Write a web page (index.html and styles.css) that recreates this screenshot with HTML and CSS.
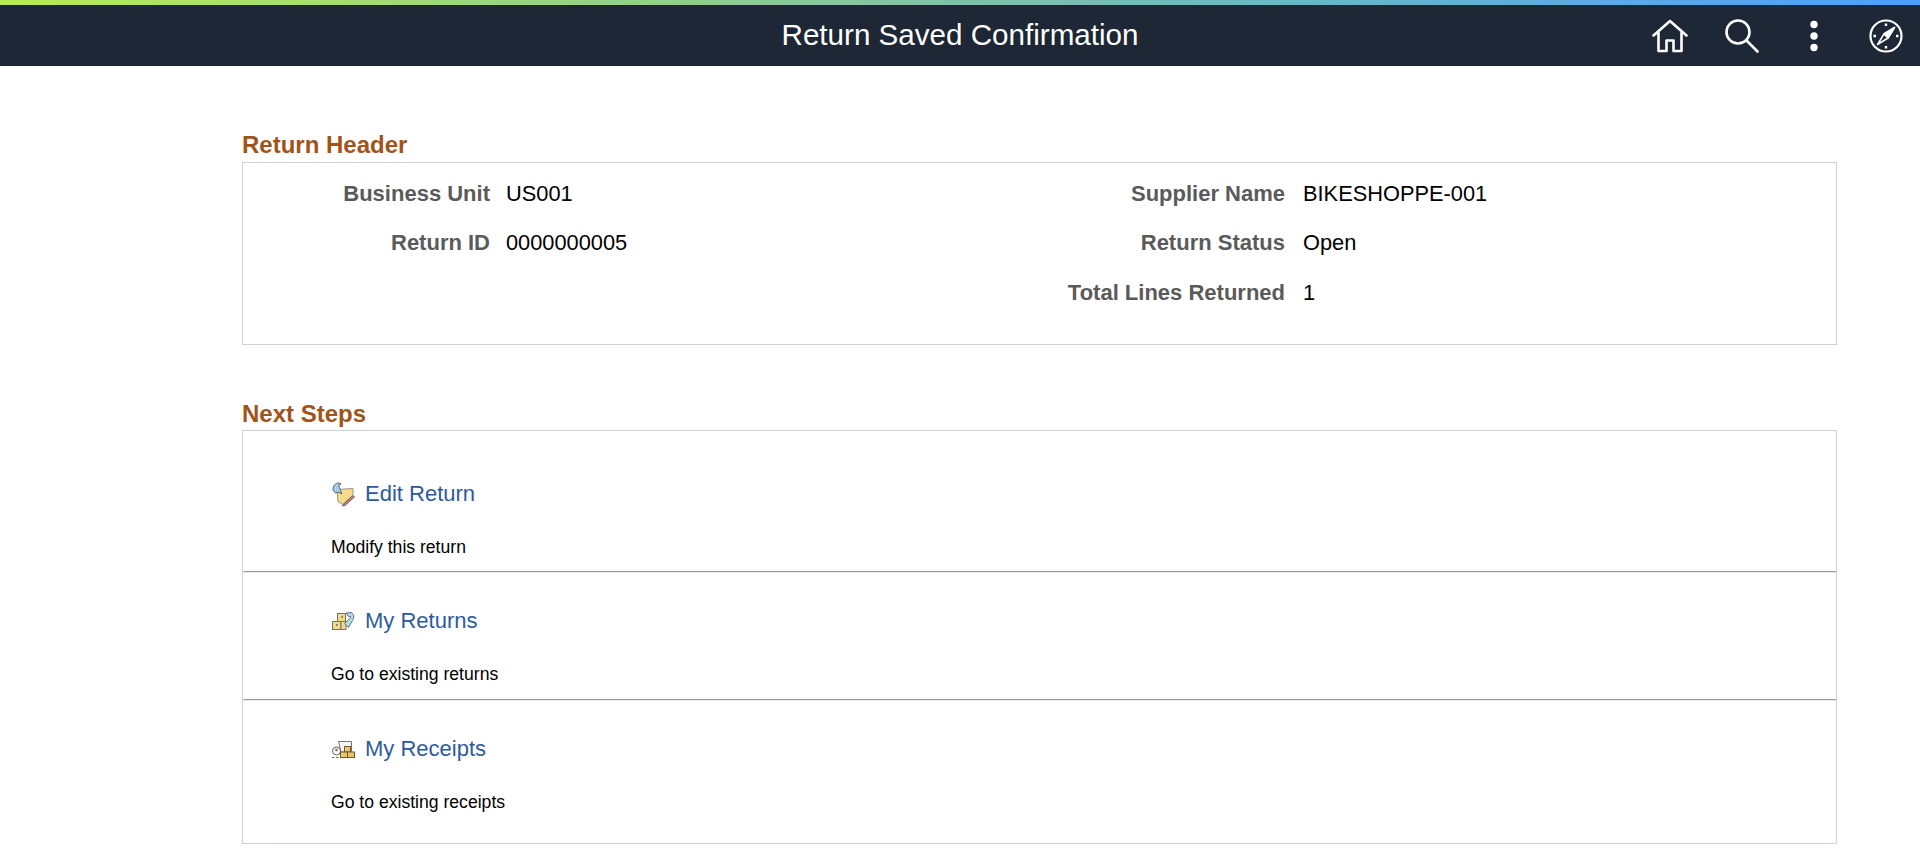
FILE: index.html
```html
<!DOCTYPE html>
<html lang="en">
<head>
    <meta charset="UTF-8">
    <title>Return Saved Confirmation</title>
    <link rel="stylesheet" href="styles.css">
</head>
<body>
    <div class="accent-bar"></div>
    <header class="banner">
        <h1>Return Saved Confirmation</h1>
        <nav class="banner-icons">
            <a href="#" class="banner-icon" aria-label="Home">
                <svg width="36" height="36" viewBox="0 0 36 36" fill="none" stroke="#fff" stroke-width="2.6" stroke-linejoin="round" stroke-linecap="round">
                    <path d="M1.500 17.500 L18 3 L34.500 17.500"/>
                    <path d="M6.500 15 V33 H14.500 V22.500 H21.500 V33 H29.500 V15"/>
                </svg>
            </a>
            <a href="#" class="banner-icon" aria-label="Search">
                <svg width="36" height="36" viewBox="0 0 36 36" fill="none" stroke="#fff" stroke-width="2.6" stroke-linecap="round">
                    <circle cx="14" cy="14" r="11.500"/>
                    <path d="M22.500 22.500 L33.500 33.500"/>
                </svg>
            </a>
            <a href="#" class="banner-icon" aria-label="Actions">
                <svg width="36" height="36" viewBox="0 0 36 36" fill="#fff">
                    <circle cx="18" cy="6.500" r="3.700"/>
                    <circle cx="18" cy="18" r="3.700"/>
                    <circle cx="18" cy="29.500" r="3.700"/>
                </svg>
            </a>
            <a href="#" class="banner-icon" aria-label="Navigator">
                <svg width="36" height="36" viewBox="0 0 36 36" fill="none" stroke="#fff" stroke-width="2.200">
                    <circle cx="18" cy="18" r="15.500"/>
                    <path d="M26.500 9.500 L20 20 L9.500 26.500 L16 16 Z" stroke-width="1.500" stroke-linejoin="round"/>
                    <path d="M26.500 9.500 L20 20 L16 16 Z" fill="#fff" stroke-width="1.500" stroke-linejoin="round"/>
                    <path d="M18 5.500v2.500M18 28v2.500M5.500 18H8M28 18h2.500" stroke-width="2.400"/>
                </svg>
            </a>
        </nav>
    </header>

    <main class="content">
        <section class="group header-group">
            <h2 class="group-title">Return Header</h2>
            <div class="group-box header-box">
                <div class="field-col">
                    <div class="field"><span class="field-label">Business Unit</span><span class="field-value">US001</span></div>
                    <div class="field"><span class="field-label">Return ID</span><span class="field-value">0000000005</span></div>
                </div>
                <div class="field-col">
                    <div class="field"><span class="field-label">Supplier Name</span><span class="field-value">BIKESHOPPE-001</span></div>
                    <div class="field"><span class="field-label">Return Status</span><span class="field-value">Open</span></div>
                    <div class="field"><span class="field-label">Total Lines Returned</span><span class="field-value">1</span></div>
                </div>
            </div>
        </section>

        <section class="group">
            <h2 class="group-title">Next Steps</h2>
            <div class="group-box">
                <div class="step">
                    <a href="#" class="step-link">
                        <svg width="24" height="26" viewBox="0 0 24 26">
                            <path d="M6 8.500 L22 7.500 V14 L12 23.500 L7 20.500 Z" fill="#f8dc8e" stroke="#9a9488"/>
                            <path d="M4.500 12 L2 9 C2 5 4 2 8 2 L10 3 L7.500 4.500 L11 13 L7 11 Z" fill="#a8cde8" stroke="#55626f"/>
                            <path d="M22 14.500 L12.500 23 L11.500 25 L14 24.500 L23.500 16 Z" fill="#d9737f" stroke="#6a6a6a"/>
                        </svg>
                        <span>Edit Return</span>
                    </a>
                    <p class="step-desc">Modify this return</p>
                </div>
                <div class="step">
                    <a href="#" class="step-link">
                        <svg width="24" height="26" viewBox="0 0 24 26">
                            <rect x="1.500" y="13.500" width="8.500" height="8" fill="#f4d88c" stroke="#77756a"/>
                            <rect x="10" y="13.500" width="5" height="8" fill="#f4d88c" stroke="#77756a"/>
                            <rect x="6.500" y="5.500" width="8" height="8" fill="#f4d88c" stroke="#77756a"/>
                            <path d="M5 17h1.500M10.500 9h1.500" stroke="#555" stroke-width="1.500"/>
                            <path d="M15 5 L20 4.500 C23 6 23.500 9.500 21.500 12.500 L17.500 19.500 L13.500 15.500 L17.500 12 L20 9 L17 8 Z" fill="#b9d9ef" stroke="#5d7184"/>
                        </svg>
                        <span>My Returns</span>
                    </a>
                    <p class="step-desc">Go to existing returns</p>
                </div>
                <div class="step">
                    <a href="#" class="step-link">
                        <svg width="24" height="26" viewBox="0 0 24 26">
                            <path d="M7.500 5.500 H20.500 V16 H10 Z" fill="#f6f6f6" stroke="#77756a"/>
                            <circle cx="5.500" cy="15" r="4" fill="#fff" stroke="#66645c"/>
                            <circle cx="5.500" cy="14" r="1.400" fill="#b06a78"/>
                            <path d="M1 21.500 H9" stroke="#66645c" stroke-dasharray="2.500 1.500"/>
                            <rect x="13.500" y="10.500" width="6" height="5.500" fill="#e8c566" stroke="#6e5a35"/>
                            <rect x="9.500" y="16" width="7" height="5.500" fill="#e8c566" stroke="#6e5a35"/>
                            <rect x="16.500" y="16" width="7" height="5.500" fill="#e8c566" stroke="#6e5a35"/>
                        </svg>
                        <span>My Receipts</span>
                    </a>
                    <p class="step-desc">Go to existing receipts</p>
                </div>
            </div>
        </section>
    </main>
</body>
</html>
```

FILE: styles.css
```css
* {
    box-sizing: border-box;
}
body {
    margin: 0;
    font-family: "Liberation Sans", Arial, sans-serif;
    background-color: white;
    color: black;
}
.accent-bar {
    height: 5px;
    background: linear-gradient(to right, #b7ec50 0%, #7fc2a8 50%, #4c9ffe 100%);
}
.banner {
    display: flex;
    align-items: center;
    justify-content: flex-end;
    position: relative;
    height: 61px;
    background-color: #1d2735;
}
.banner h1 {
    position: absolute;
    left: 0;
    right: 0;
    margin: -2px 0 0;
    text-align: center;
    font-size: 29.6px;
    font-weight: normal;
    color: white;
}
.banner-icons {
    display: flex;
    gap: 36px;
    padding-right: 16px;
    position: relative;
}
.banner-icon {
    display: block;
    height: 36px;
}
.content {
    padding: 66px 83px 0 242px;
}
.group {
    margin-bottom: 56px;
}
.group-title {
    margin: 0 0 4px;
    font-size: 24px;
    line-height: 26px;
    font-weight: bold;
    color: #a0541a;
}
.group + .group .group-title {
    margin-bottom: 3px;
}
.group-box {
    border: 1px solid #d0d0d8;
}
.header-box {
    display: grid;
    grid-template-columns: 795px 1fr;
    height: 183px;
    padding-top: 6px;
}
.field {
    display: flex;
    align-items: center;
    height: 49.5px;
    font-size: 22px;
}
.field-label {
    width: 263px;
    padding-right: 16px;
    text-align: right;
    font-weight: bold;
    color: #5a5a5a;
    white-space: nowrap;
}
.field-col + .field-col .field-label {
    width: 265px;
    padding-right: 18px;
}
.field-value {
    font-size: 21.8px;
    color: black;
}
.step {
    height: 128px;
    padding: 36px 0 0 88px;
    border-bottom: 1px solid #9a9a9a;
    box-shadow: 0 1px 0 #e8e8e8;
}
.step:first-child {
    height: 141px;
    padding-top: 50px;
}
.step:last-child {
    height: 143px;
    border-bottom: none;
    box-shadow: none;
}
.step-link {
    display: flex;
    align-items: center;
    gap: 10px;
    height: 26px;
    font-size: 22px;
    color: #2d5a9e;
    text-decoration: none;
}
.step-desc {
    margin: 27px 0 0;
    font-size: 17.6px;
    line-height: 26px;
    color: black;
}
```
